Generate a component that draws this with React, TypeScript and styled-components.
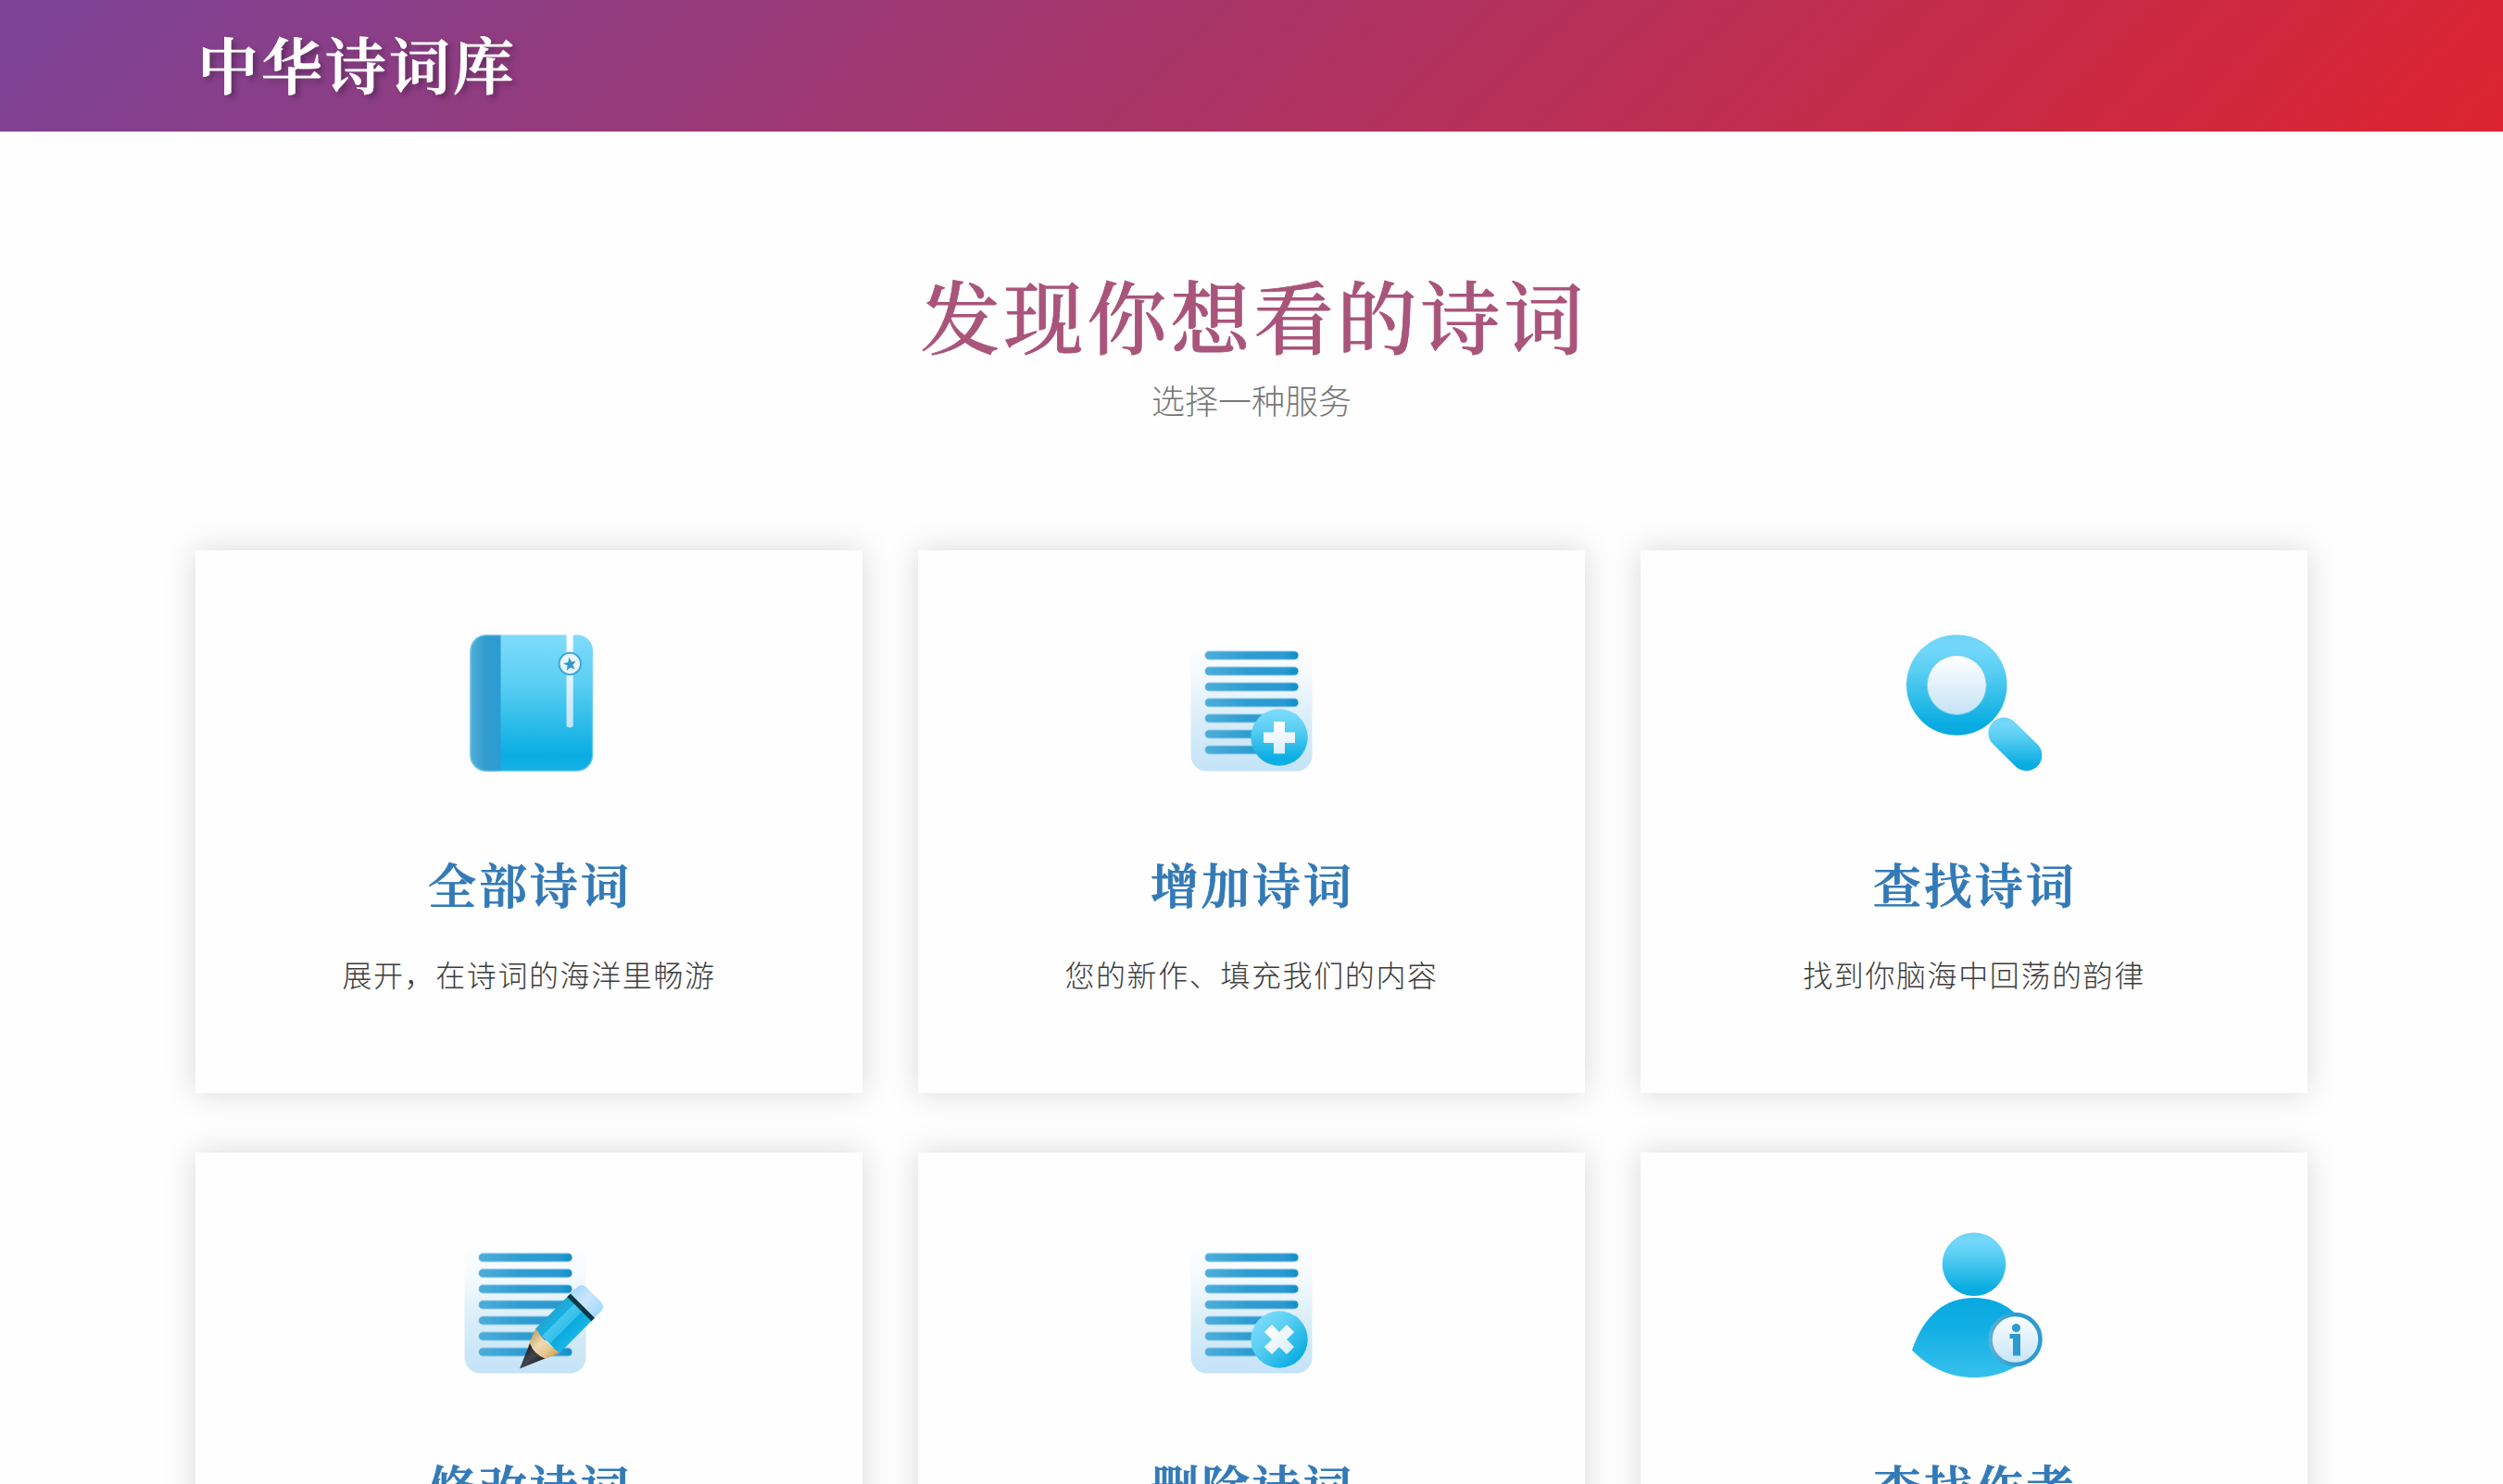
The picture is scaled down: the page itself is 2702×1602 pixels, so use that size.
import React from "react";
import styled, { createGlobalStyle } from "styled-components";

const serif = `"Songti SC", "Noto Serif CJK SC", "Noto Serif SC", "Noto Sans CJK SC", serif`;
const sans = `"Noto Sans CJK SC", sans-serif`;

const GlobalStyle = createGlobalStyle`
  * { box-sizing: border-box; }
  html, body { margin: 0; height: 1602px; overflow: hidden; background: #fefefe; }
`;

const Header = styled.header`
  height: 142px;
  padding: 0 0 6px 213px;
  display: flex;
  align-items: center;
  background: linear-gradient(135deg, #7b4397 0%, #dc2430 100%);
`;

const Brand = styled.h1`
  margin: 0;
  font: 600 66px/1.2 ${serif};
  -webkit-text-stroke: 0.8px currentColor;
  letter-spacing: 3px;
  color: #fff;
  text-shadow: 4px 4px 6px rgba(0, 0, 0, 0.3);
`;

const Hero = styled.section`
  height: 452px;
  padding-top: 139px;
  display: flex;
  flex-direction: column;
  align-items: center;
`;

const Title = styled.h2`
  margin: 0;
  padding-left: 5px;
  height: 119px;
  font: 500 86px/116px ${serif};
  -webkit-text-stroke: 0.8px currentColor;
  letter-spacing: 4px;
  color: #a9547a;
`;

const Subtitle = styled.p`
  margin: 0;
  height: 62px;
  font: 300 36px/62px ${sans};
  color: #777;
`;

const Grid = styled.main`
  width: 2280px;
  margin: 0 auto;
  display: grid;
  grid-template-columns: repeat(3, 720px);
  gap: 64px 60px;
`;

const Card = styled.article`
  height: 586px;
  padding-top: 80px;
  display: flex;
  flex-direction: column;
  align-items: center;
  background: #fefefe;
  box-shadow: 0 0 32px rgba(0, 0, 0, 0.15);
`;

const Icon = styled.svg`
  width: 200px;
  height: 180px;
  display: block;
`;

const CardTitle = styled.h3`
  margin: 64px 0 0;
  padding-left: 2px;
  font: 600 52px/72px ${serif};
  -webkit-text-stroke: 0.8px currentColor;
  letter-spacing: 3px;
  color: #337ab7;
`;

const CardText = styled.p`
  margin: 37px 0 0;
  font: 300 32px/48px ${sans};
  letter-spacing: 1.6px;
  color: #3c3c3c;
`;

const GradientDefs = styled.svg`
  position: absolute;
  width: 0;
  height: 0;
`;

function Defs() {
  return (
    <GradientDefs>
      <defs>
        <linearGradient id="cyan" x1="0" y1="0" x2="0" y2="1">
          <stop offset="0" stopColor="#7fdcfc" />
          <stop offset=".35" stopColor="#5bcff3" />
          <stop offset=".88" stopColor="#0aade2" />
          <stop offset="1" stopColor="#16b0e4" />
        </linearGradient>
        <linearGradient id="lens" x1="0" y1="0" x2="0" y2="1">
          <stop offset="0" stopColor="#6fd3f6" />
          <stop offset=".12" stopColor="#74d8fb" />
          <stop offset=".35" stopColor="#5bcff3" />
          <stop offset=".88" stopColor="#0aade2" />
          <stop offset="1" stopColor="#08a9e0" />
        </linearGradient>
        <linearGradient id="cyanDiag" x1="0" y1="0" x2="1" y2="1">
          <stop offset=".1" stopColor="#7fdcfc" />
          <stop offset=".4" stopColor="#5bcff3" />
          <stop offset=".85" stopColor="#0aade2" />
        </linearGradient>
        <linearGradient id="spine" x1="0" y1="0" x2="1" y2="0">
          <stop offset="0" stopColor="#55b1da" />
          <stop offset=".5" stopColor="#309ccf" />
          <stop offset="1" stopColor="#2c9bd1" />
        </linearGradient>
        <linearGradient id="line" x1="0" y1="0" x2="1" y2="0">
          <stop offset="0" stopColor="#4dadd9" />
          <stop offset=".45" stopColor="#2f9dd1" />
          <stop offset=".85" stopColor="#2a99d0" />
          <stop offset="1" stopColor="#118dc9" />
        </linearGradient>
        <linearGradient id="paper" x1="0" y1="0" x2="0" y2="1">
          <stop offset="0" stopColor="#fefefe" />
          <stop offset=".25" stopColor="#f5fafe" />
          <stop offset=".6" stopColor="#d9edf8" />
          <stop offset="1" stopColor="#c4e3f7" />
        </linearGradient>
        <linearGradient id="glass" x1="0" y1="0" x2="0" y2="1">
          <stop offset="0" stopColor="#ffffff" />
          <stop offset="1" stopColor="#c4e3f6" />
        </linearGradient>
        <linearGradient id="cross" x1="0" y1="0" x2="0" y2="1">
          <stop offset="0" stopColor="#ffffff" />
          <stop offset="1" stopColor="#dceefa" />
        </linearGradient>
        <linearGradient id="body" x1="0" y1="0" x2="0" y2="1">
          <stop offset="0" stopColor="#0aa8e0" />
          <stop offset=".3" stopColor="#0eade3" />
          <stop offset="1" stopColor="#35c0ec" />
        </linearGradient>
        <linearGradient id="pencil" x1="0" y1="0" x2="1" y2="0">
          <stop offset="0" stopColor="#22a6d2" />
          <stop offset=".28" stopColor="#16b1e2" />
          <stop offset=".3" stopColor="#48c7ee" />
          <stop offset=".6" stopColor="#34bfea" />
          <stop offset=".62" stopColor="#0aa9df" />
          <stop offset="1" stopColor="#19b6e6" />
        </linearGradient>
        <linearGradient id="wood" x1="0" y1="0" x2="1" y2="0">
          <stop offset="0" stopColor="#c99d5a" />
          <stop offset=".4" stopColor="#eed9b2" />
          <stop offset=".7" stopColor="#e8c990" />
          <stop offset="1" stopColor="#cf9c4e" />
        </linearGradient>
        <linearGradient id="lead" x1="0" y1="0" x2="1" y2="0">
          <stop offset="0" stopColor="#1d1f26" />
          <stop offset=".5" stopColor="#43464f" />
          <stop offset="1" stopColor="#22242b" />
        </linearGradient>
        <linearGradient id="eraser" x1="0" y1="0" x2="1" y2="0">
          <stop offset="0" stopColor="#a9d9fb" />
          <stop offset=".45" stopColor="#c8e6fd" />
          <stop offset="1" stopColor="#a4d8fd" />
        </linearGradient>
        <clipPath id="cover"><rect x="36.500" y="11.500" width="132.500" height="147" rx="17" /></clipPath>
      </defs>
    </GradientDefs>
  );
}

const LINES = [0, 17, 34, 51, 68, 85, 102];

function Sheet({ x }: { x: number }) {
  return (
    <>
      <rect x={x} y="19" width="131" height="139.500" rx="17" fill="url(#paper)" />
      {LINES.map((dy) => (
        <g key={dy}>
          <rect x={x + 15} y={28.5 + dy} width="101.500" height="10" rx="5" fill="#92cce9" />
          <rect x={x + 15.7} y={29.5 + dy} width="100" height="8" rx="4" fill="url(#line)" />
        </g>
      ))}
    </>
  );
}

function BookIcon() {
  return (
    <Icon viewBox="0 0 200 180">
      <g clipPath="url(#cover)">
        <rect x="36" y="11" width="133" height="148" fill="url(#cyan)" />
        <rect x="36" y="11" width="33.500" height="148" fill="url(#spine)" />
      </g>
      <rect x="37" y="12" width="131.500" height="146" rx="17" fill="none" stroke="#8fd6f2" strokeOpacity=".55" strokeWidth="1.200" />
      <path d="M140.500 11h7.200v97a3.600 3.600 0 0 1-7.200 0z" fill="url(#glass)" />
      <circle cx="144.300" cy="42.500" r="11.700" fill="#eaf5fc" stroke="#3fa7d6" strokeWidth="2" />
      <path d="M143.500 35.500l2.300 4.800 5-.4-3.600 3.800 2.500 4.900-5-2.200-3.900 3.600.8-5.400-4.700-2.700 5.300-1z" fill="#2f9ace" />
    </Icon>
  );
}

function AddIcon() {
  return (
    <Icon viewBox="0 0 200 180">
      <Sheet x={34.5} />
      <circle cx="130" cy="122" r="30.700" fill="url(#cyan)" />
      <path d="M124 105h12v11.500h11v11.500h-11v11.500h-12v-11.500h-11v-11.500h11z" fill="url(#cross)" />
    </Icon>
  );
}

function DeleteIcon() {
  return (
    <Icon viewBox="0 0 200 180">
      <Sheet x={34.5} />
      <circle cx="130" cy="122" r="30.700" fill="url(#cyanDiag)" />
      <path transform="rotate(-45 130 122)" d="M124.300 105h11.400v11.300h11.300v11.400h-11.300v11.300h-11.400v-11.300h-11.300v-11.400h11.300z" fill="url(#cross)" />
    </Icon>
  );
}

function SearchIcon() {
  return (
    <Icon viewBox="0 0 200 180">
      <circle cx="81.300" cy="65.500" r="54.300" fill="url(#lens)" />
      <circle cx="81.300" cy="65.500" r="32" fill="url(#glass)" stroke="#74cdef" strokeWidth="1" />
      <path d="M120.300 105.500a16.700 16.700 0 0 1 24.200.5l24.700 24.300a16.800 16.800 0 0 1-23.700 23.700l-24.700-24.200a16.800 16.800 0 0 1-.5-24.300z" fill="url(#lens)" />
    </Icon>
  );
}

function EditIcon() {
  return (
    <Icon viewBox="0 0 200 180">
      <Sheet x={30.5} />
      <g transform="translate(90 153.500) rotate(45)">
        <path d="M-18.500 -94v-11q0-8 8-8h21q8 0 8 8v11z" fill="url(#eraser)" />
        <path d="M-18.500 -93h37v51h-37z" fill="url(#pencil)" />
        <rect x="-18.500" y="-96" width="37" height="5" fill="#053846" />
        <path d="M-18.500 -43Q0 -38 18.500 -43L11 -24H-11z" fill="url(#wood)" />
        <path d="M-11.500 -27Q0 -22 11.500 -27L0 0z" fill="url(#lead)" />
      </g>
    </Icon>
  );
}

function AuthorIcon() {
  return (
    <Icon viewBox="0 0 200 180">
      <circle cx="100" cy="40.700" r="34.300" fill="url(#lens)" />
      <path d="M33 133.500C46 96 68 77 100 77s56 19 67 56.500C149 153 126 163 100 163s-48-10-67-29.500z" fill="url(#body)" />
      <circle cx="144.500" cy="122" r="27" fill="url(#glass)" stroke="url(#spine)" strokeWidth="4.500" />
      <circle cx="145.500" cy="109.500" r="4.500" fill="#2b9ace" />
      <path d="M138.500 116h11.500v23.500h-8v-18.500h-3.500z" fill="#2b9ace" />
    </Icon>
  );
}

const SERVICES = [
  { title: "全部诗词", text: "展开，在诗词的海洋里畅游", Glyph: BookIcon },
  { title: "增加诗词", text: "您的新作、填充我们的内容", Glyph: AddIcon },
  { title: "查找诗词", text: "找到你脑海中回荡的韵律", Glyph: SearchIcon },
  { title: "修改诗词", text: "", Glyph: EditIcon },
  { title: "删除诗词", text: "", Glyph: DeleteIcon },
  { title: "查找作者", text: "", Glyph: AuthorIcon },
];

export default function App() {
  return (
    <>
      <GlobalStyle />
      <Defs />
      <Header><Brand>中华诗词库</Brand></Header>
      <Hero>
        <Title>发现你想看的诗词</Title>
        <Subtitle>选择一种服务</Subtitle>
      </Hero>
      <Grid>
        {SERVICES.map(({ title, text, Glyph }) => (
          <Card key={title}>
            <Glyph />
            <CardTitle>{title}</CardTitle>
            {text && <CardText>{text}</CardText>}
          </Card>
        ))}
      </Grid>
    </>
  );
}
